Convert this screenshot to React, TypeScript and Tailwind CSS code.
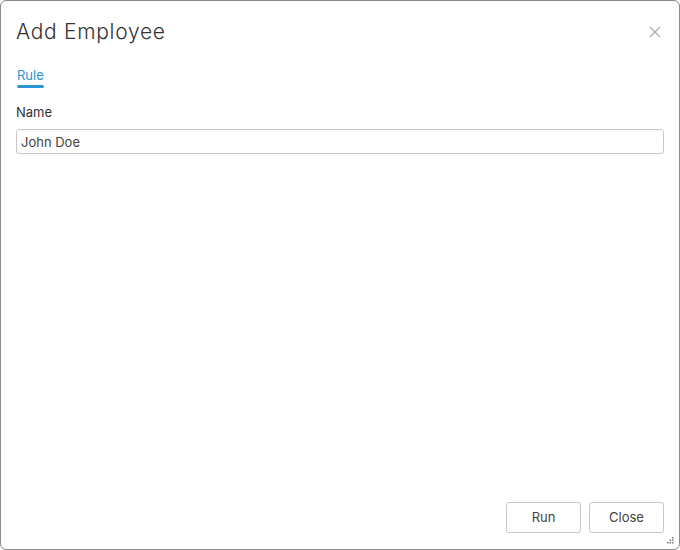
export default function App() {
  return (
    <div className="w-[680px] h-[550px] bg-white" style={{ fontFamily: "Inter, 'Open Sans', sans-serif" }}>
      <div className="relative w-full h-full border border-[#8a8a8a] rounded-[6px] flex flex-col">
        <div className="flex items-center justify-between pl-[15px] pr-[18px] pt-[17px]">
          <h2 className="text-[21px] leading-[28px] text-[#333] font-light tracking-[0.7px]">Add Employee</h2>
          <button className="text-[#aaa]">
            <svg width="12" height="12" viewBox="0 0 12 12" stroke="currentColor" strokeWidth="1.2">
              <path d="M1 1L11 11M11 1L1 11" />
            </svg>
          </button>
        </div>
        <div className="px-[15px] mt-[16px]">
          <div className="inline-block">
            <div className="text-[13px] leading-[18px] text-[#2b96d3] px-px">Rule</div>
            <div className="h-[3px] bg-[#2b96d3] rounded-sm mt-[1px] mx-[1px]" />
          </div>
        </div>
        <div className="px-[15px] mt-[15px]">
          <label className="block text-[13px] leading-[18px] text-[#333]">Name</label>
          <input
            defaultValue="John Doe"
            className="mt-[8px] w-full h-[25px] border border-[#c8c8c8] rounded-[3px] px-[4px] text-[13px] text-[#444] outline-none"
          />
        </div>
        <div className="flex-1" />
        <div className="flex justify-end gap-[8px] px-[15px] pb-[16px]">
          <button className="w-[75px] h-[31px] border border-[#c8c8c8] rounded-[3px] text-[13px] text-[#444] bg-white">Run</button>
          <button className="w-[75px] h-[31px] border border-[#c8c8c8] rounded-[3px] text-[13px] text-[#444] bg-white">Close</button>
        </div>
        <svg className="absolute right-[5px] bottom-[5px]" width="7" height="7" viewBox="0 0 7 7" fill="#777">
          <rect x="5" y="0" width="1.5" height="1.5" />
          <rect x="2.5" y="2.5" width="1.5" height="1.5" />
          <rect x="5" y="2.5" width="1.5" height="1.5" />
          <rect x="0" y="5" width="1.5" height="1.5" />
          <rect x="2.5" y="5" width="1.5" height="1.5" />
          <rect x="5" y="5" width="1.5" height="1.5" />
        </svg>
      </div>
    </div>
  );
}
